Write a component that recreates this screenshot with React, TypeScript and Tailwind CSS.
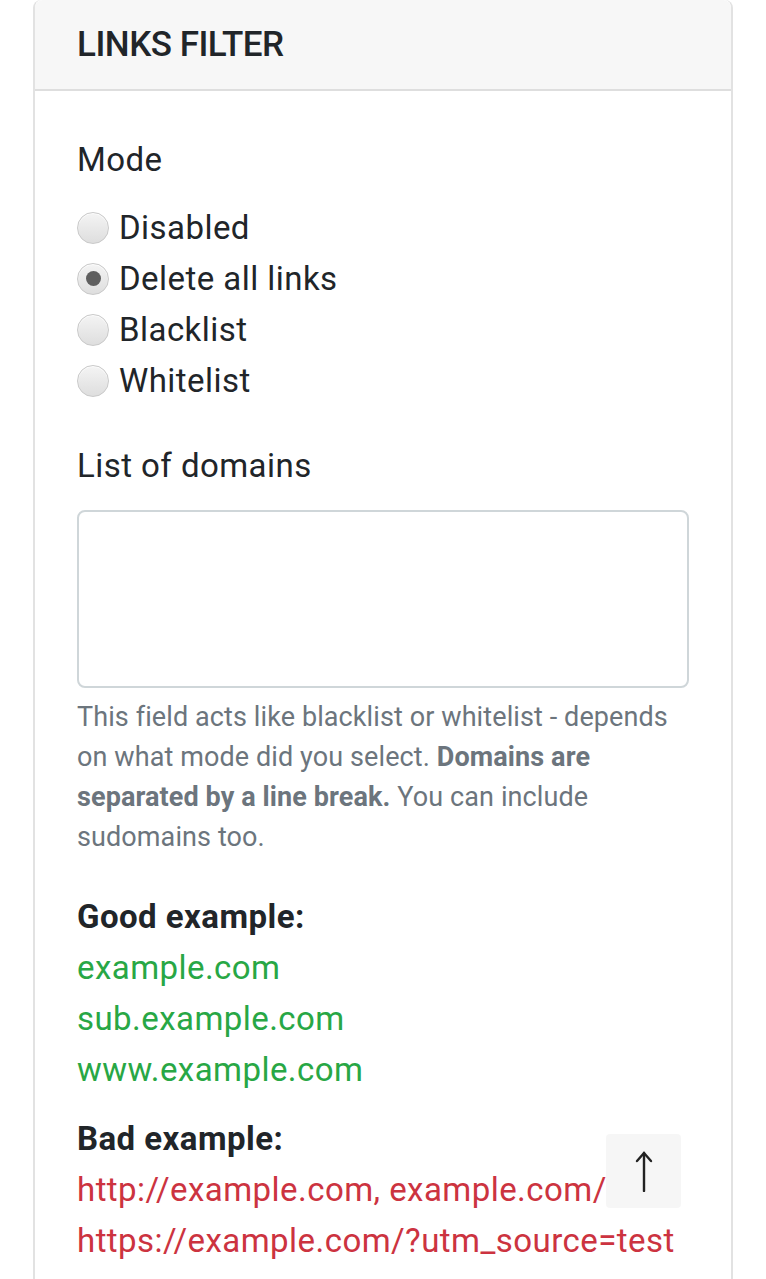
const modes = ["Disabled", "Delete all links", "Blacklist", "Whitelist"];
const good = ["example.com", "sub.example.com", "www.example.com"];
const bad = ["http://example.com, example.com/", "https://example.com/?utm_source=test"];

const Radio = ({ checked }: { checked?: boolean }) => (
  <span className="flex h-[32px] w-[32px] shrink-0 items-center justify-center rounded-full border border-[#c9c9c9] bg-gradient-to-b from-[#f4f4f4] to-[#dedede] shadow-[inset_0_1px_1px_rgba(255,255,255,0.9)]">
    {checked && <span className="h-[15px] w-[15px] rounded-full bg-[#5f5f5f]" />}
  </span>
);

export default function App() {
  return (
    <div className="relative h-[1279px] overflow-hidden bg-white font-['Roboto',sans-serif] text-[#212529]">
      <div className="mx-[33px] rounded-t-[8px] border-x-2 border-[#e2e2e2] min-h-[1279px]">
        {/* header */}
        <div className="flex h-[91px] items-center border-b-2 border-[#dedede] bg-[#f7f7f7] pl-[42px] rounded-t-[8px]">
          <h2 className="text-[35px] font-medium tracking-[-0.5px] leading-none">LINKS FILTER</h2>
        </div>

        <div className="pl-[42px] pr-[42px] pt-[45px] text-[33px] tracking-[0.45px]">
          <div className="leading-[48px]">Mode</div>
          <div className="mt-[18px] flex flex-col">
            {modes.map((m, i) => (
              <label key={m} className="flex h-[51px] items-center gap-[10px]">
                <Radio checked={i === 1} />
                <span>{m}</span>
              </label>
            ))}
          </div>

          <div className="mt-[36px] leading-[48px]">List of domains</div>
          <div className="mt-[20px] h-[178px] w-[612px] rounded-[8px] border-2 border-[#cfd6d9] bg-white" />
          <p className="mt-[9px] text-[27px] tracking-[0.1px] leading-[40px] text-[#6c757d]">
            This field acts like blacklist or whitelist - depends on what mode did you select.{" "}
            <b className="font-bold">Domains are separated by a line break.</b> You can include sudomains
            too.
          </p>

          <div className="mt-[34px] font-bold leading-[51px]">Good example:</div>
          {good.map((g) => (
            <div key={g} className="leading-[51px] text-[#28a745]">{g}</div>
          ))}
          <div className="mt-[18px] font-bold leading-[51px]">Bad example:</div>
          {bad.map((b) => (
            <div key={b} className="whitespace-nowrap leading-[51px] text-[#cc3340]">{b}</div>
          ))}
        </div>
      </div>

      {/* scroll to top */}
      <button className="absolute left-[606px] top-[1134px] flex h-[74px] w-[75px] items-center justify-center rounded-[4px] bg-[#f5f5f5]/95">
        <svg width="20" height="42" viewBox="0 0 20 42" fill="none" stroke="#222" strokeWidth="2.4" strokeLinecap="round">
          <path d="M10 3v38" />
          <path d="M3 11l7-8 7 8" />
        </svg>
      </button>
    </div>
  );
}
